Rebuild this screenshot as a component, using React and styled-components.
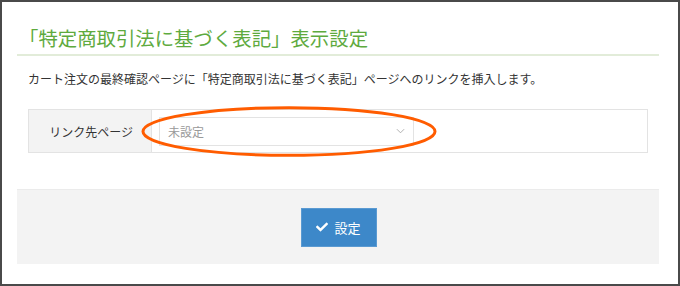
import React from 'react';
import styled, { createGlobalStyle } from 'styled-components';
import { FaCheck } from 'react-icons/fa';

const GlobalStyle = createGlobalStyle`
    html, body {
        margin: 0;
        padding: 0;
        background: #ffffff;
    }
    body {
        font-family: "Noto Sans CJK JP", "Noto Sans", sans-serif;
        color: #333333;
    }
`

const SettingsPanel = () => {
    return (
        <>
            <GlobalStyle/>
            <Frame>
                <Heading>「特定商取引法に基づく表記」表示設定</Heading>
                <Description>
                    カート注文の最終確認ページに「特定商取引法に基づく表記」ページへのリンクを挿入します。
                </Description>
                <FormTable>
                    <Label>リンク先ページ</Label>
                    <Field>
                        <Select>
                            <Placeholder>未設定</Placeholder>
                            <Chevron viewBox="0 0 10 6">
                                <polyline points="1,1 5,5 9,1" />
                            </Chevron>
                        </Select>
                        <Highlight viewBox="0 0 300 53">
                            <ellipse cx="150" cy="26.5" rx="147" ry="24" />
                        </Highlight>
                    </Field>
                </FormTable>
                <Footer>
                    <SubmitButton type="button">
                        <FaCheck size={12}/>
                        <span>設定</span>
                    </SubmitButton>
                </Footer>
            </Frame>
        </>
    )
}

const Frame = styled.div`
    width: 680px;
    height: 286px;
    box-sizing: border-box;
    border: 2px solid #4a4a4a;
    padding: 0 19px 0 15px;
    overflow: hidden;
`

const Heading = styled.h1`
    margin: 22px 0 0;
    padding: 0 0 2px 2px;
    font-size: 19.4px;
    line-height: 28px;
    font-weight: 400;
    color: #5eaa3e;
    border-bottom: 2px solid #e2ecd9;
`

const Description = styled.p`
    margin: 14px 0 0 11px;
    font-size: 12px;
    line-height: 18px;
    color: #333333;
`

const FormTable = styled.div`
    display: flex;
    margin: 21px 11px 0;
    height: 44px;
    box-sizing: border-box;
    border: 1px solid #e3e3e3;
`

const Label = styled.div`
    width: 123px;
    box-sizing: border-box;
    display: flex;
    align-items: center;
    justify-content: flex-end;
    padding-right: 18px;
    background: #f3f3f3;
    border-right: 1px solid #e3e3e3;
    font-size: 12px;
    color: #333333;
`

const Field = styled.div`
    position: relative;
    flex: 1;
    display: flex;
    align-items: center;
    padding-left: 7px;
`

const Select = styled.div`
    width: 255px;
    height: 29px;
    box-sizing: border-box;
    border: 1px solid #e3e3e3;
    display: flex;
    align-items: center;
    justify-content: space-between;
    padding: 0 8px 0 8px;
    background: #ffffff;
`

const Placeholder = styled.span`
    font-size: 12px;
    color: #999999;
`

const Chevron = styled.svg`
    width: 9px;
    height: 6px;
    fill: none;
    stroke: #a8a8a8;
    stroke-width: 1;
`

const Highlight = styled.svg`
    position: absolute;
    left: -12px;
    top: -5px;
    width: 298px;
    height: 53px;
    overflow: visible;
    fill: none;
    stroke: #ff5c00;
    stroke-width: 3;
    pointer-events: none;
`

const Footer = styled.div`
    margin-top: 36px;
    height: 75px;
    box-sizing: border-box;
    background: #f3f3f3;
    border-top: 1px solid #ebebeb;
    display: flex;
    justify-content: center;
    align-items: center;
`

const SubmitButton = styled.button`
    width: 76px;
    height: 39px;
    margin-left: 1px;
    box-sizing: border-box;
    display: flex;
    align-items: center;
    justify-content: center;
    gap: 6px;
    background: #3d88c9;
    border: 1px solid #5a9ad2;
    color: #ffffff;
    font-family: "Noto Sans CJK JP", "Noto Sans", sans-serif;
    font-size: 13px;
    cursor: pointer;
`

export default SettingsPanel
